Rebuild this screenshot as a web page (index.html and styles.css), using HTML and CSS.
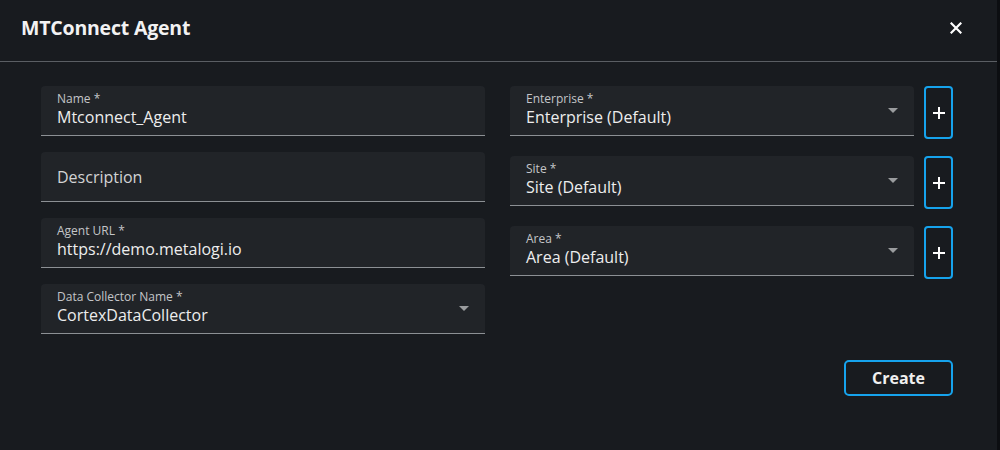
FILE: index.html
```html
<!DOCTYPE html>
<html lang="en">
<head>
<meta charset="utf-8">
<title>MTConnect Agent</title>
<link rel="stylesheet" href="styles.css">
</head>
<body>
<div class="dialog">
  <header class="header">
    <h1 class="title">MTConnect Agent</h1>
    <button class="close" aria-label="Close">
      <svg width="12" height="12" viewBox="0 0 12 12"><path d="M1.5 1.5 L10.5 10.5 M10.5 1.5 L1.5 10.5" stroke="#ffffff" stroke-width="2.2" stroke-linecap="square"/></svg>
    </button>
  </header>
  <div class="content">
    <div class="grid">
      <div class="col-left">
        <div class="field">
          <span class="label">Name *</span>
          <span class="value">Mtconnect_Agent</span>
        </div>
        <div class="field field-empty">
          <span class="placeholder">Description</span>
        </div>
        <div class="field">
          <span class="label">Agent URL *</span>
          <span class="value">https://demo.metalogi.io</span>
        </div>
        <div class="field select">
          <span class="label">Data Collector Name *</span>
          <span class="value">CortexDataCollector</span>
          <span class="arrow"></span>
        </div>
      </div>
      <div class="col-right">
        <div class="row">
          <div class="field select">
            <span class="label">Enterprise *</span>
            <span class="value">Enterprise (Default)</span>
            <span class="arrow"></span>
          </div>
          <button class="add" aria-label="Add enterprise"><svg width="14" height="14" viewBox="0 0 14 14"><path d="M7 1 V13 M1 7 H13" stroke="#ffffff" stroke-width="2"/></svg></button>
        </div>
        <div class="row">
          <div class="field select">
            <span class="label">Site *</span>
            <span class="value">Site (Default)</span>
            <span class="arrow"></span>
          </div>
          <button class="add" aria-label="Add site"><svg width="14" height="14" viewBox="0 0 14 14"><path d="M7 1 V13 M1 7 H13" stroke="#ffffff" stroke-width="2"/></svg></button>
        </div>
        <div class="row">
          <div class="field select">
            <span class="label">Area *</span>
            <span class="value">Area (Default)</span>
            <span class="arrow"></span>
          </div>
          <button class="add" aria-label="Add area"><svg width="14" height="14" viewBox="0 0 14 14"><path d="M7 1 V13 M1 7 H13" stroke="#ffffff" stroke-width="2"/></svg></button>
        </div>
      </div>
    </div>
    <div class="footer">
      <button class="create">Create</button>
    </div>
  </div>
</div>
</body>
</html>
```
FILE: styles.css
```css
* { box-sizing: border-box; }
html, body {
  margin: 0;
  padding: 0;
  background: #0c0e11;
  height: 450px;
  overflow: hidden;
}
body {
  font-family: "Open Sans", "Noto Sans", sans-serif;
  color: #ececec;
}
.dialog {
  width: 997px;
  height: 450px;
  background: #181b1f;
}
.header {
  height: 62px;
  display: flex;
  align-items: center;
  justify-content: space-between;
  padding: 0 35px 0 21px;
  border-bottom: 1px solid #5a5e63;
}
.title {
  margin: 0;
  font-size: 19.5px;
  font-weight: 700;
  color: #f2f2f2;
  letter-spacing: -0.2px;
  position: relative;
  top: -3px;
}
.close {
  background: none;
  border: 0;
  padding: 0;
  width: 12px;
  height: 12px;
  display: flex;
  position: relative;
  top: -3px;
}
.content {
  padding: 24px 44px 0 41px;
}
.grid {
  display: flex;
  gap: 25px;
}
.col-left {
  width: 444px;
  display: flex;
  flex-direction: column;
  gap: 16px;
}
.col-right {
  width: 442px;
  display: flex;
  flex-direction: column;
  gap: 17px;
}
.row {
  display: flex;
  gap: 10px;
  align-items: flex-start;
}
.row .field {
  width: 404px;
  flex: none;
}
.field {
  position: relative;
  height: 50px;
  background: #212428;
  border-radius: 4px 4px 0 0;
  border-bottom: 1px solid #8c9094;
  padding: 5px 16px 0 16px;
  display: flex;
  flex-direction: column;
}
.label {
  font-size: 12px;
  line-height: 16px;
  color: #c4c6c8;
}
.value {
  font-size: 16px;
  line-height: 20px;
  color: #ededed;
}
.field-empty {
  justify-content: center;
  padding-top: 0;
}
.placeholder {
  font-size: 16px;
  line-height: 20px;
  color: #d2d3d4;
}
.arrow {
  position: absolute;
  right: 16px;
  top: 22px;
  width: 0;
  height: 0;
  border-left: 5px solid transparent;
  border-right: 5px solid transparent;
  border-top: 5px solid #9a9c9e;
}
.add {
  width: 29px;
  height: 53px;
  flex: none;
  background: transparent;
  border: 2px solid #16a3ec;
  border-radius: 4px;
  display: flex;
  align-items: center;
  justify-content: center;
  padding: 0;
}
.footer {
  display: flex;
  justify-content: flex-end;
  margin-top: 26px;
}
.create {
  width: 109px;
  height: 36px;
  background: transparent;
  border: 2px solid #16a3ec;
  border-radius: 5px;
  font-family: "Open Sans", "Noto Sans", sans-serif;
  font-size: 16px;
  font-weight: 700;
  color: #f0f0f0;
  padding: 0;
}
```
